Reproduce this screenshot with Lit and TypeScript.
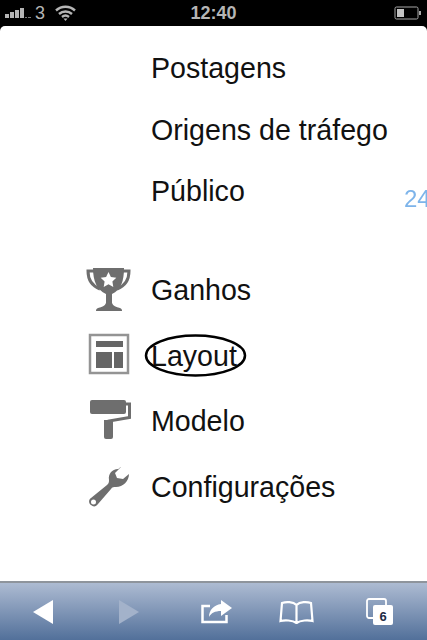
import { LitElement, css, html, svg } from "lit";
import { customElement } from "lit/decorators.js";

const trophy = svg`<svg class="icon" width="47" height="46" viewBox="0 0 47 46">
  <path fill="none" stroke="#6e6e6e" stroke-width="3" d="M10 4H3c0 9 4 15 12 18M37 4h7c0 9-4 15-12 18"/>
  <path fill="#6e6e6e" d="M8 1h31c0 13-3 22-12 26v9c1 3 4 4 8 5 2 1 2 2 2 3H11c0-1 0-2 2-3 4-1 7-2 8-5v-9C12 23 8 14 8 1z"/>
  <path fill="#fff" d="M23.5 5l2.400 4.900 5.400.8-3.900 3.800.9 5.400-4.800-2.600-4.800 2.600.9-5.400-3.900-3.800 5.400-.8z"/>
</svg>`;

const layoutIcon = svg`<svg class="icon" width="47" height="46" viewBox="0 0 47 46">
  <rect x="5" y="2" width="38" height="38" fill="#fff" stroke="#949494" stroke-width="2.500"/>
  <rect x="11" y="8" width="27" height="6" fill="#666"/>
  <rect x="11" y="19" width="16" height="16" fill="#666"/>
  <rect x="29" y="19" width="9" height="16" fill="#666"/>
</svg>`;

const roller = svg`<svg class="icon" width="47" height="46" viewBox="0 0 47 46">
  <path fill="#6e6e6e" d="M5 3q0-2 2-2h32q2 0 2 2v10q0 2-2 2H7q-2 0-2-2z"/>
  <path fill="none" stroke="#6e6e6e" stroke-width="3" d="M41 5h3.500v13.500L24 22v6"/>
  <path fill="#6e6e6e" d="M19 21h9v17q0 2-2 2h-5q-2 0-2-2z"/>
</svg>`;

const wrench = svg`<svg class="icon" width="47" height="46" viewBox="0 0 47 46">
  <path fill="#6e6e6e" fill-rule="evenodd" d="M33 4c-6 0-10 5-9 11 0 2 0 3-2 5L6 33c-3 2-2 6 0 7 2 2 5 2 7-1l13-15c1-2 3-2 5-2 7 0 13-6 13-13l-6 5-6-1-2-5 6-6c-1 0-2 2-3 2zM8.500 34.500a2.500 2.500 0 1 1 0 5 2.500 2.500 0 0 1 0-5z"/>
</svg>`;

@customElement("app-root")
export class AppRoot extends LitElement {
  static styles = css`
    :host {
      display: flex;
      flex-direction: column;
      position: relative;
      width: 427px;
      height: 640px;
      overflow: hidden;
      background: #000;
      font-family: "Liberation Sans", Arial, sans-serif;
    }

    .status {
      display: grid;
      grid-template-columns: 1fr auto 1fr;
      align-items: center;
      height: 26px;
      padding: 0 5px;
      box-sizing: border-box;
      color: #b5b5b5;
    }

    .status-left {
      display: flex;
      align-items: center;
      font-size: 18px;
    }

    .carrier {
      margin: 0 10px 0 4px;
    }

    .clock {
      font-size: 18px;
      font-weight: bold;
    }

    .status-right {
      display: flex;
      justify-content: flex-end;
    }

    .page {
      flex: 1;
      background: #fff;
      border-radius: 5px 5px 0 0;
      padding: 12px 0 0 85px;
      color: #111;
      font-size: 28.6px;
    }

    .row {
      display: flex;
      align-items: center;
      height: 61.5px;
      padding-left: 66px;
    }

    .tools {
      margin-top: 35px;
    }

    .tools .row {
      height: 65.75px;
      padding-left: 0;
    }

    .icon {
      flex: none;
      width: 47px;
      margin-right: 19px;
    }

    .oval {
      position: absolute;
      left: 144px;
      top: 333px;
    }

    .peek {
      position: absolute;
      left: 404px;
      top: 185px;
      color: #7db4ea;
      font-size: 24px;
      filter: blur(0.5px);
    }

    .toolbar {
      display: grid;
      grid-template-columns: 86px 86px 89px 71px 96px;
      align-items: center;
      justify-items: center;
      height: 59px;
      box-sizing: border-box;
      border-top: 2px solid #8e949c;
      background: linear-gradient(#adbbd2, #52709a);
    }

    .toolbar svg {
      display: block;
    }
  `;

  render() {
    return html`
      <div class="status">
        <div class="status-left">
          <svg width="26" height="10" viewBox="0 0 26 10">
            <rect x="0" y="6" width="4" height="4" fill="#b5b5b5" />
            <rect x="5" y="4" width="4" height="6" fill="#b5b5b5" />
            <rect x="10" y="2" width="4" height="8" fill="#b5b5b5" />
            <rect x="15" y="0" width="4" height="10" fill="#b5b5b5" />
            <rect x="20" y="9" width="2" height="1" fill="#777" />
            <rect x="23" y="9" width="3" height="1" fill="#777" />
          </svg>
          <span class="carrier">3</span>
          <svg width="21" height="16" viewBox="0 0 21 16">
            <path
              fill="none"
              stroke="#b5b5b5"
              stroke-width="2.400"
              d="M1 5.500c5.500-5 13.500-5 19 0M4 9c3.800-3.400 9.200-3.400 13 0M7 12c2-1.600 5-1.600 7 0"
            />
            <path fill="#b5b5b5" d="M8.500 13.500h4l-2 2.500z" />
          </svg>
        </div>
        <span class="clock">12:40</span>
        <div class="status-right">
          <svg width="28" height="14" viewBox="0 0 28 14">
            <rect x="1" y="1" width="23" height="12" rx="1.500" fill="none" stroke="#a8a8a8" />
            <rect x="3" y="3" width="7" height="8" fill="#c4c4c4" />
            <rect x="25" y="5" width="2" height="4" fill="#a8a8a8" />
          </svg>
        </div>
      </div>

      <div class="page">
        <div class="row">Postagens</div>
        <div class="row">Origens de tráfego</div>
        <div class="row">Público</div>
        <div class="tools">
          <div class="row">${trophy}Ganhos</div>
          <div class="row">${layoutIcon}Layout</div>
          <div class="row">${roller}Modelo</div>
          <div class="row">${wrench}Configurações</div>
        </div>
      </div>

      <div class="toolbar">
        <svg width="22" height="26" viewBox="0 0 22 26">
          <path fill="#fff" d="M21 1v24L1 13z" />
        </svg>
        <svg width="22" height="26" viewBox="0 0 22 26">
          <path fill="#a3b2ca" d="M1 1v24l20-12z" />
        </svg>
        <svg width="33" height="26" viewBox="0 0 33 26">
          <path fill="none" stroke="#fff" stroke-width="2.500" d="M10 7H2.500v16h24v-7" />
          <path fill="#fff" d="M21 1l11 8-11 8v-5c-6 0-10 2-12 6 0-7 5-12 12-13z" />
        </svg>
        <svg width="35" height="24" viewBox="0 0 35 24">
          <path
            fill="none"
            stroke="#fff"
            stroke-width="2.200"
            d="M17.500 5C14 1.500 7 1.500 3 3L1.500 21c4-1 12-1 16 2 4-3 12-3 16-2L32 3c-4-1.500-11-1.500-14.500 2zv18"
          />
        </svg>
        <svg width="28" height="28" viewBox="0 0 28 28">
          <rect x="1" y="1" width="19" height="19" rx="2" fill="none" stroke="#fff" stroke-width="1.800" />
          <rect x="7" y="7" width="20" height="20" rx="2" fill="#fff" />
          <text x="17" y="23" text-anchor="middle" font-size="13" font-weight="bold" fill="#1d2c44" font-family="Liberation Sans">6</text>
        </svg>
      </div>

      <span class="peek">24</span>
      <svg class="oval" width="103" height="45" viewBox="0 0 103 45">
        <ellipse cx="51.500" cy="22.500" rx="49.500" ry="20" fill="none" stroke="#000" stroke-width="2.500" />
      </svg>
    `;
  }
}
